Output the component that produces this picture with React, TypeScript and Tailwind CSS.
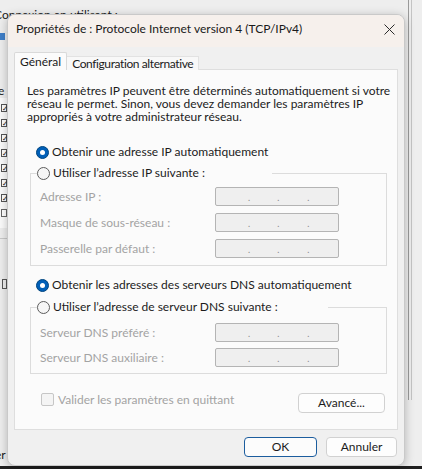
import React from "react";

function Radio({ checked }: { checked?: boolean }) {
  if (checked) {
    return (
      <span className="w-[13px] h-[13px] rounded-full bg-[#005fb8] border border-[#00457f] flex items-center justify-center shrink-0">
        <span className="w-[5px] h-[5px] rounded-full bg-white" />
      </span>
    );
  }
  return <span className="w-[13px] h-[13px] rounded-full border border-[#5c5c5c] bg-[#f6f6f6] shrink-0" />;
}

function IpBox() {
  return (
    <div className="w-[124px] h-[19px] border border-[#b4b4b4] rounded-[2px] bg-[#efefef] flex items-end pb-[3px] text-[9px] leading-[9px] text-[#8a8a8a]">
      <span className="ml-[32px]">.</span>
      <span className="ml-[27px]">.</span>
      <span className="ml-[28px]">.</span>
    </div>
  );
}

function Row({ label }: { label: string }) {
  return (
    <div className="flex items-center h-[19px]">
      <span className="w-[175px] text-[#a3a3a3]">{label}</span>
      <IpBox />
    </div>
  );
}

export default function App() {
  return (
    <div className="relative w-[422px] h-[469px] overflow-hidden bg-[#eeeeee] font-['Lato',sans-serif] text-[12px] text-[#1b1b1b]">
      {/* background window fragments */}
      <div className="absolute left-[-6px] top-[8px] text-[12px] leading-[14px] text-[#1b1b1b] whitespace-nowrap">Connexion en utilisant :</div>
      <div className="absolute left-0 top-[33px] w-[5px] h-[7px] bg-[#3f7fc8]" />
      <div className="absolute left-[-2px] top-[84px] text-[12px] leading-[14px]">e</div>
      <div className="absolute left-0 top-[98px] w-[8px] h-[130px] bg-[#fbfbfb] border-r border-[#d8d8d8]" />
      {[104, 119, 134, 149, 164, 179, 194].map((y) => (
        <div key={y} className="absolute left-[1px] w-[6px] h-[8px] border border-[#555] bg-white text-[7px] leading-[6px] text-[#111]" style={{ top: y }}>
          ✓
        </div>
      ))}
      <div className="absolute left-[1px] top-[209px] w-[6px] h-[8px] border border-[#666] bg-white" />
      <div className="absolute left-0 top-[238px] w-[8px] h-[1px] bg-[#c8c8c8]" />
      <div className="absolute left-[2px] top-[279px] w-[5px] h-[10px] border border-[#555]" />
      <div className="absolute left-[-5px] top-[448px] text-[12px] leading-[14px]">er</div>
      <div className="absolute left-[408px] top-0 w-[1px] h-[400px] bg-[#9a9a9a]" />
      <div className="absolute left-[411px] top-0 w-[1px] h-[400px] bg-[#c4c4c4]" />
      <div className="absolute left-0 top-[466px] w-[422px] h-[3px] bg-[#1f1f1f]" />

      {/* dialog */}
      <div className="absolute left-[7px] top-[14px] w-[398px] h-[452px] rounded-[8px] border border-[#c9c9c9] bg-[#f0f0f0] shadow-[0_2px_10px_rgba(0,0,0,0.25)] overflow-hidden flex flex-col">
        <div className="h-[32px] bg-[#f6f0ec] flex items-center pl-[8px] pr-[9px] pb-[4px] justify-between shrink-0">
          <span className="text-[12px] text-[#1a1a1a]">Propriétés de : Protocole Internet version 4 (TCP/IPv4)</span>
          <svg width="11" height="11" viewBox="0 0 11 11">
            <path d="M0.5 0.5 L10.5 10.5 M10.5 0.5 L0.5 10.5" stroke="#2b2b2b" strokeWidth="1" />
          </svg>
        </div>

        {/* tabs */}
        <div className="flex items-end ml-[6px] mt-[5px] relative z-10 -mb-[1px]">
          <div className="h-[18px] px-[5px] border border-b-0 border-[#d9d9d9] bg-[#fbfbfb] flex items-center rounded-t-[2px]">
            Général
          </div>
          <div className="h-[14px] px-[5px] border-t border-r border-[#e2e2e2] bg-[#f8f8f8] flex items-center tracking-[-0.4px]">
            Configuration alternative
          </div>
        </div>

        {/* panel */}
        <div className="mx-[6px] h-[361px] border border-[#dedede] bg-[#fbfbfb] flex flex-col shrink-0">
          <p className="mt-[14px] ml-[12px] leading-[13px]">
            Les paramètres IP peuvent être déterminés automatiquement si votre
            <br />
            réseau le permet. Sinon, vous devez demander les paramètres IP
            <br />
            appropriés à votre administrateur réseau.
          </p>

          <div className="mt-[21px] ml-[21px] h-[16px] flex items-center gap-[3px]">
            <Radio checked />
            <span>Obtenir une adresse IP automatiquement</span>
          </div>

          <fieldset className="mt-[5px] ml-[15px] mr-[10px] border border-[#dcdcdc] pl-[9px] pt-[6px] pb-[7px] flex flex-col gap-[7px]">
            <legend className="-ml-[3px]">
              <span className="w-[235px] h-[16px] flex items-center gap-[3px]">
                <Radio />
                <span>Utiliser l’adresse IP suivante :</span>
              </span>
            </legend>
            <Row label="Adresse IP :" />
            <Row label="Masque de sous-réseau :" />
            <Row label="Passerelle par défaut :" />
          </fieldset>

          <div className="mt-[11px] ml-[21px] h-[16px] flex items-center gap-[3px]">
            <Radio checked />
            <span>Obtenir les adresses des serveurs DNS automatiquement</span>
          </div>

          <fieldset className="mt-[6px] ml-[15px] mr-[10px] border border-[#dcdcdc] pl-[9px] pt-[8px] pb-[6px] flex flex-col gap-[6px]">
            <legend className="-ml-[3px]">
              <span className="w-[291px] h-[16px] flex items-center gap-[3px]">
                <Radio />
                <span>Utiliser l’adresse de serveur DNS suivante :</span>
              </span>
            </legend>
            <Row label="Serveur DNS préféré :" />
            <Row label="Serveur DNS auxiliaire :" />
          </fieldset>

          <div className="mt-[19px] flex items-start justify-between pl-[26px] pr-[12px]">
            <div className="flex items-center gap-[4px] h-[13px]">
              <span className="w-[13px] h-[13px] border border-[#c6c6c6] rounded-[2px] bg-[#f4f4f4]" />
              <span className="text-[#a3a3a3]">Valider les paramètres en quittant</span>
            </div>
            <button className="w-[87px] h-[20px] border border-[#d1d1d1] rounded-[4px] bg-[#fdfdfd] flex items-center justify-center">
              Avancé...
            </button>
          </div>
        </div>

        {/* footer */}
        <div className="flex justify-end gap-[9px] mt-[7px] mr-[7px]">
          <button className="w-[73px] h-[20px] border border-[#1c5d9e] rounded-[4px] bg-[#fcfcfc] flex items-center justify-center">
            OK
          </button>
          <button className="w-[71px] h-[20px] border border-[#d1d1d1] rounded-[4px] bg-[#fdfdfd] flex items-center justify-center">
            Annuler
          </button>
        </div>
      </div>
    </div>
  );
}
